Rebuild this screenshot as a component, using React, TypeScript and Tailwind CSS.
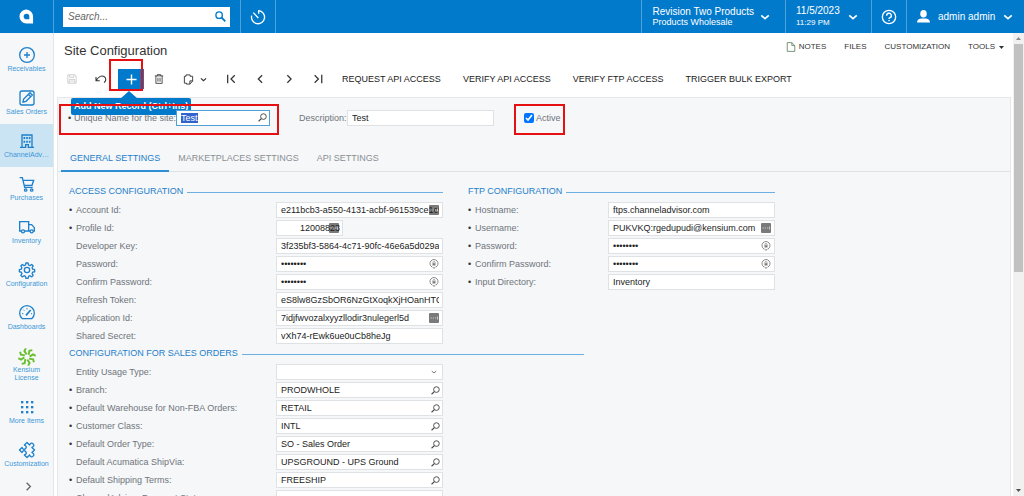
import { useEffect, useRef } from 'react';
import type { ReactNode } from 'react';
import { clsx } from 'clsx';

type IconProps = { className?: string; children: ReactNode };

function Icon({ className, children }: IconProps) {
  return (
    <svg
      viewBox="0 0 24 24"
      fill="none"
      stroke="currentColor"
      strokeWidth="2"
      aria-hidden="true"
      className={clsx('shrink-0', className)}
    >
      {children}
    </svg>
  );
}

const chevronDown = <path d="M3 8l9 8 9-8" strokeWidth="4" />;

const magnifier = (
  <>
    <circle cx="14.5" cy="9.5" r="7.5" strokeWidth="2.5" />
    <path d="M9 15L1.5 22" strokeWidth="3" />
  </>
);

const modules: { label: string; icon: ReactNode; active?: boolean; green?: boolean }[] = [
  {
    label: 'Receivables',
    icon: (
      <>
        <circle cx="12" cy="12" r="11" />
        <path d="M12 7.5v9M7.5 12h9" />
      </>
    ),
  },
  {
    label: 'Sales Orders',
    icon: (
      <>
        <rect x="1.5" y="1.5" width="21" height="21" rx="3" />
        <path d="M6 18l1-4.5 9.5-9.500 3.500 3.500-9.500 9.500zM14 6.500l3.500 3.500" />
      </>
    ),
  },
  {
    label: 'ChannelAdv…',
    active: true,
    icon: (
      <>
        <path d="M4.5 21.500V3h15v18.500M1.500 21.500h8.500v-4h4v4h8.500" />
        <path d="M8 6v3M12 6v3M16 6v3M8 11.500v3M12 11.500v3M16 11.500v3" strokeWidth="2.500" />
      </>
    ),
  },
  {
    label: 'Purchases',
    icon: (
      <>
        <path d="M1 2.500h4l3.500 14.500h12M6 6.500h16l-2.500 7.500H8" />
        <circle cx="10" cy="21" r="1.800" />
        <circle cx="19" cy="21" r="1.800" />
      </>
    ),
  },
  {
    label: 'Inventory',
    icon: (
      <>
        <path d="M3.500 18H1V4h13.500v14H8.500M14.500 8.500h4.500l4 4.500v5h-1.500M14.500 18h2" />
        <circle cx="6" cy="18.500" r="2.300" />
        <circle cx="19" cy="18.500" r="2.300" />
      </>
    ),
  },
  {
    label: 'Configuration',
    icon: (
      <g strokeLinejoin="round">
        <circle cx="12" cy="12" r="4" />
        <path d="M10.400 1.500h3.200l.7 3 2.100.9 2.700-1.700 2.200 2.200-1.700 2.700.9 2.100 3 .7v3.200l-3 .7-.9 2.100 1.700 2.700-2.200 2.200-2.700-1.700-2.100.9-.7 3h-3.200l-.7-3-2.100-.9-2.700 1.700-2.200-2.200 1.700-2.700-.9-2.100-3-.7v-3.200l3-.7.9-2.100-1.700-2.700 2.200-2.200 2.700 1.700 2.100-.9z" />
      </g>
    ),
  },
  {
    label: 'Dashboards',
    icon: (
      <>
        <path d="M5 20.500a11 11 0 1 1 14 0z" />
        <path d="M10.500 15.500l7-8" strokeWidth="2.500" />
        <path d="M4.500 13h2M6.500 7l1.500 1.500M12 4.500v2M18 13h1.500" strokeWidth="1.500" />
      </>
    ),
  },
  {
    label: 'Kensium License',
    green: true,
    icon: (
      <>
        {[0, 45, 90, 135, 180, 225, 270, 315].map((angle) => (
          <path
            key={angle}
            d="M11.500 8.500L8.500 4l2-3.500"
            strokeWidth="2.600"
            transform={`rotate(${angle} 12 12)`}
          />
        ))}
      </>
    ),
  },
  {
    label: 'More Items',
    icon: (
      <g fill="currentColor" stroke="none">
        {[3, 10.5, 18].map((y) =>
          [3, 10.5, 18].map((x) => <rect key={`${x}-${y}`} x={x} y={y} width="3.5" height="3.5" />),
        )}
      </g>
    ),
  },
  {
    label: 'Customization',
    icon: (
      <path
        transform="rotate(45 12 12)"
        strokeLinejoin="round"
        d="M4 4h5.500c-1.500-3.500.2-5 2.500-5s4 1.500 2.500 5H20v5.500c3.500-1.500 5 .2 5 2.500s-1.500 4-5 2.500V20h-5.500c1.500-3.500-.2-5-2.500-5s-4 1.500-2.500 5H4v-5.500c3.500 1.500 5-.2 5-2.500s-1.500-4-5-2.500z"
      />
    ),
  },
];

type Adornment = 'search' | 'dots' | 'key' | 'select';

type Field = {
  label: string;
  value: string;
  required?: boolean;
  type?: 'password';
  short?: boolean;
  adornment?: Adornment;
};

const accessFields: Field[] = [
  { label: 'Account Id:', value: 'e211bcb3-a550-4131-acbf-961539ce1c9c', required: true, adornment: 'dots' },
  { label: 'Profile Id:', value: '12008823', required: true, short: true, adornment: 'dots' },
  { label: 'Developer Key:', value: '3f235bf3-5864-4c71-90fc-46e6a5d029a8' },
  { label: 'Password:', value: 'password', type: 'password', adornment: 'key' },
  { label: 'Confirm Password:', value: 'password', type: 'password', adornment: 'key' },
  { label: 'Refresh Token:', value: 'eS8lw8GzSbOR6NzGtXoqkXjHOanHTQ0' },
  { label: 'Application Id:', value: '7idjfwvozalxyyzllodir3nulegerl5d', adornment: 'dots' },
  { label: 'Shared Secret:', value: 'vXh74-rEwk6ue0uCb8heJg' },
];

const ftpFields: Field[] = [
  { label: 'Hostname:', value: 'ftps.channeladvisor.com', required: true },
  { label: 'Username:', value: 'PUKVKQ:rgedupudi@kensium.com', required: true, adornment: 'dots' },
  { label: 'Password:', value: 'password', required: true, type: 'password', adornment: 'key' },
  { label: 'Confirm Password:', value: 'password', required: true, type: 'password', adornment: 'key' },
  { label: 'Input Directory:', value: 'Inventory', required: true },
];

const orderFields: Field[] = [
  { label: 'Entity Usage Type:', value: '', adornment: 'select' },
  { label: 'Branch:', value: 'PRODWHOLE', required: true, adornment: 'search' },
  { label: 'Default Warehouse for Non-FBA Orders:', value: 'RETAIL', required: true, adornment: 'search' },
  { label: 'Customer Class:', value: 'INTL', required: true, adornment: 'search' },
  { label: 'Default Order Type:', value: 'SO - Sales Order', required: true, adornment: 'search' },
  { label: 'Default Acumatica ShipVia:', value: 'UPSGROUND - UPS Ground', adornment: 'search' },
  { label: 'Default Shipping Terms:', value: 'FREESHIP', required: true, adornment: 'search' },
  { label: 'ChannelAdvisor Payment Status:', value: '', adornment: 'select' },
];

function FieldIcon({ kind }: { kind: Adornment }) {
  const place = 'pointer-events-none absolute inset-y-0 my-auto';
  if (kind === 'search') {
    return <Icon className={clsx(place, 'right-[3px] size-[9px] text-[#444]')}>{magnifier}</Icon>;
  }
  if (kind === 'select') {
    return <Icon className={clsx(place, 'right-[6px] size-[6px] text-[#777]')}>{chevronDown}</Icon>;
  }
  if (kind === 'dots') {
    return (
      <svg viewBox="0 0 20 20" aria-hidden="true" className={clsx(place, 'right-1 size-[10px]')}>
        <rect width="20" height="20" rx="2" fill="#222" fillOpacity="0.6" />
        <path d="M3 10h2.500M7.500 10H10M12 10h2.500M17 7v6" stroke="#fff" strokeWidth="1.500" strokeOpacity="0.8" />
      </svg>
    );
  }
  return (
    <svg
      viewBox="0 0 20 20"
      fill="none"
      stroke="#7d7d7d"
      strokeWidth="1.800"
      aria-hidden="true"
      className={clsx(place, 'right-1 size-[10px]')}
    >
      <path d="M6 16a8 8 0 1 1 8 0M7 15.500l3 3.500 3-3.500" />
      <path d="M7 8.500h6v4.500H7z" fill="#7d7d7d" stroke="none" />
      <path d="M8 9V7a2 2 0 0 1 4 0v2" strokeWidth="1.400" />
    </svg>
  );
}

function FieldRow({ id, field, narrow }: { id: string; field: Field; narrow?: boolean }) {
  return (
    <div className="flex h-[18px] items-center">
      <label
        htmlFor={id}
        className={clsx('flex shrink-0 items-center text-[#707479]', narrow ? 'w-[140px]' : 'w-[207px]')}
      >
        <span className="w-[7px] text-[#333]">{field.required && '•'}</span>
        {field.label}
      </label>
      <div className={clsx('relative', field.short ? 'w-[67px]' : 'w-[167px]')}>
        {field.adornment === 'select' ? (
          <select
            id={id}
            className="block h-4 w-full appearance-none border border-[#dfe2e5] bg-white px-1 text-[#222] outline-none"
          >
            <option />
          </select>
        ) : (
          <input
            id={id}
            type={field.type ?? 'text'}
            defaultValue={field.value}
            className={clsx(
              'block h-4 w-full border border-[#dfe2e5] bg-white pl-1 text-[#222] outline-none',
              field.short ? 'pr-[2px] text-right' : 'pr-[3px]',
            )}
          />
        )}
        {field.adornment && <FieldIcon kind={field.adornment} />}
      </div>
    </div>
  );
}

type FieldGroupProps = { id: string; title: string; fields: Field[]; narrow?: boolean };

function FieldGroup({ id, title, fields, narrow }: FieldGroupProps) {
  return (
    <section>
      <h2 className="flex h-[18px] items-center gap-1 pb-[2px] text-[#1e80cb]">
        {title}
        <span className="mt-[2px] h-px flex-1 bg-[#6cb0e2]" />
      </h2>
      {fields.map((field, i) => (
        <FieldRow key={field.label} id={`${id}-${i}`} field={field} narrow={narrow} />
      ))}
    </section>
  );
}

function Header() {
  return (
    <header className="flex h-[33px] shrink-0 items-center bg-[#027acc] text-white">
      <div className="flex h-full w-[54px] shrink-0 items-center justify-center border-r border-[#4da2dc]">
        <svg viewBox="0 0 16 16" aria-label="Acumatica" className="size-[15px]">
          <path d="M8 .5A7.500 7.500 0 1 0 8 15.500h7V8A7.500 7.500 0 0 0 8 .5z" fill="#fff" />
          <path d="M8 5A3 3 0 1 0 8 11h3V8a3 3 0 0 0-3-3z" fill="#027acc" />
        </svg>
      </div>
      <div className="flex h-full items-center border-r border-[#4da2dc] pl-[9px] pr-[10px]">
        <div className="relative">
          <input
            type="search"
            aria-label="Search"
            placeholder="Search..."
            className="block h-5 w-[167px] bg-white pl-[5px] pr-5 text-[10px] italic text-[#333] outline-none placeholder:text-[#666]"
          />
          <Icon className="absolute inset-y-0 right-1 my-auto size-[11px] text-[#027acc]">
            <circle cx="9" cy="9" r="7" strokeWidth="3" />
            <path d="M14 14l8.500 8.500" strokeWidth="4" />
          </Icon>
        </div>
      </div>
      <button type="button" aria-label="Recent" className="flex h-full w-[35px] items-center justify-center border-r border-[#4da2dc]">
        <Icon className="size-4">
          <path d="M13 2.500A9.800 9.800 0 1 1 2.500 10M13 2v5M12.500 13.500L5 5.500" />
        </Icon>
      </button>

      <div className="ml-auto flex h-full">
        <button type="button" className="flex h-full items-center gap-[6px] border-l border-[#4da2dc] pl-[10px] pr-[15px] text-left">
          <span>
            <span className="block text-[10px] leading-[11px]">Revision Two Products</span>
            <span className="block leading-[11px]">Products Wholesale</span>
          </span>
          <Icon className="size-[10px]">{chevronDown}</Icon>
        </button>
        <button type="button" className="flex h-full w-[86px] items-center gap-2 border-l border-[#4da2dc] pl-[10px] text-left">
          <span>
            <span className="block text-[10px] leading-3">11/5/2023</span>
            <span className="block text-[8px] leading-3">11:29 PM</span>
          </span>
          <Icon className="size-[10px]">{chevronDown}</Icon>
        </button>
        <button type="button" aria-label="Help" className="flex h-full w-[35px] items-center justify-center border-l border-[#4da2dc]">
          <Icon className="size-4">
            <circle cx="12" cy="12" r="10" />
            <path d="M8.500 10a3.500 3.500 0 1 1 5 3c-1 .5-1.500 1-1.500 2M12 16.500v2" />
          </Icon>
        </button>
        <button type="button" className="flex h-full w-[118px] items-center border-l border-[#4da2dc] pl-[10px]">
          <svg viewBox="0 0 24 24" fill="currentColor" aria-hidden="true" className="mr-2 size-[13px]">
            <ellipse cx="12" cy="7" rx="6" ry="7" />
            <path d="M0 23c0-5 4-7 8.500-7.500h7C20 16 24 18 24 23z" />
          </svg>
          <span className="text-[10px]">admin admin</span>
          <Icon className="ml-2 size-[10px]">{chevronDown}</Icon>
        </button>
      </div>
    </header>
  );
}

function Sidebar() {
  return (
    <nav className="flex w-[54px] shrink-0 flex-col items-center border-r border-[#e2e5e9] bg-[#f5f7f9] pt-[5px]">
      {modules.map((item) => (
        <a
          key={item.label}
          href="#"
          className={clsx(
            'flex w-full shrink-0 flex-col items-center px-1 pt-[9px] text-center text-[7px] leading-2 text-[#3d97d8]',
            item.active && 'bg-[#cbe4f4]',
            item.green ? 'h-[51px]' : 'h-[43px]',
          )}
        >
          <Icon
            className={clsx(
              'overflow-visible',
              item.green ? 'size-[18px] text-[#6abf2e]' : 'mb-[1px] size-4 text-[#1e80cb]',
            )}
          >
            {item.icon}
          </Icon>
          <span className={item.green ? 'w-8' : 'whitespace-nowrap pt-[1px]'}>{item.label}</span>
        </a>
      ))}
      <button type="button" aria-label="Expand menu" className="mt-[6px] ml-1 text-[#666]">
        <Icon className="size-[9px]">
          <path d="M7 2l10 10L7 22" strokeWidth="3.500" />
        </Icon>
      </button>
    </nav>
  );
}

type ToolProps = { label: string; disabled?: boolean; children: ReactNode };

function Tool({ label, disabled, children }: ToolProps) {
  return (
    <button
      type="button"
      aria-label={label}
      disabled={disabled}
      className="flex w-[29px] items-center justify-center text-[#333] disabled:text-[#c4c6c8]"
    >
      <Icon className="size-[10px] overflow-visible">{children}</Icon>
    </button>
  );
}

function Toolbar() {
  return (
    <div className="flex h-5 items-center">
      <Tool label="Save" disabled>
        <path d="M2 2h17l3 3v17H2zM6.500 2v6h10V2M5.500 22v-9h13v9M8 17h8" />
      </Tool>
      <Tool label="Cancel">
        <path d="M0 7v9h9M0.500 15.500C6 6 14 2 20 6.500c5 4 4.500 10-.5 14" strokeWidth="2.500" />
      </Tool>
      <div className="relative flex w-[29px] justify-end">
        <button
          type="button"
          aria-describedby="add-tip"
          aria-label="Add New Record"
          className="flex h-5 w-[26px] items-center justify-center bg-[#027acc] text-white"
        >
          <Icon className="size-[11px]">
            <path d="M12 1v22M1 12h22" strokeWidth="3" />
          </Icon>
        </button>
        <span className="pointer-events-none absolute -left-[6px] -top-[10px] z-30 h-8 w-[34px] border-2 border-[#e60f12]" />
        <div id="add-tip" role="tooltip" className="absolute -left-[44px] top-[29px] z-10 rounded-xs bg-[#027acc] px-[3px] text-[9px] leading-[17px] font-bold whitespace-nowrap text-white">
          <svg viewBox="0 0 18 8" aria-hidden="true" className="absolute -top-[7px] left-[49px] h-2 w-[18px] text-[#027acc]">
            <path d="M0 8l9-8 9 8z" fill="currentColor" />
          </svg>
          Add New Record (Ctrl+Ins)
        </div>
      </div>
      <Tool label="Delete">
        <path d="M2 4.500h20M8 4.500V1.500h8v3M4.500 4.500v18h15v-18M9.500 9v9.500M14.500 9v9.500" />
      </Tool>
      <button type="button" aria-label="Clipboard" className="flex w-[43px] items-center gap-[6px] pl-[10px] text-[#333]">
        <Icon className="size-[11px]">
          <path d="M7.500 20H3V5h3.500M6.500 5V2h9v3H21v10.500L15 22H7.500V20M21 15h-6v7" />
        </Icon>
        <Icon className="size-[7px]">{chevronDown}</Icon>
      </button>
      <Tool label="First">
        <path d="M4 2v20M21 3l-9 9 9 9" strokeWidth="3" />
      </Tool>
      <Tool label="Previous">
        <path d="M17 3l-9 9 9 9" strokeWidth="3" />
      </Tool>
      <Tool label="Next">
        <path d="M8 3l9 9-9 9" strokeWidth="3" />
      </Tool>
      <Tool label="Last">
        <path d="M21 2v20M4 3l9 9-9 9" strokeWidth="3" />
      </Tool>
      <div className="flex gap-[22px] pl-[10px] whitespace-nowrap text-[#222]">
        <button type="button">REQUEST API ACCESS</button>
        <button type="button">VERIFY API ACCESS</button>
        <button type="button">VERIFY FTP ACCESS</button>
        <button type="button">TRIGGER BULK EXPORT</button>
      </div>
    </div>
  );
}

function Summary() {
  const siteRef = useRef<HTMLInputElement>(null);

  useEffect(() => {
    siteRef.current?.focus();
    siteRef.current?.select();
  }, []);

  return (
    <div className="flex h-[47px] items-start pt-[6px] pl-[1px] text-[#707479]">
      <div className="relative z-20 flex h-[31px] w-[220px] items-center border-2 border-[#e60f12] pb-1 pl-[7px]">
        <label htmlFor="site" className="flex w-[108px] shrink-0 whitespace-nowrap">
          <span className="w-[7px] text-[#333]">•</span>
          Unique Name for the site:
        </label>
        <div className="relative w-[94px]">
          <input
            ref={siteRef}
            id="site"
            defaultValue="Test"
            className="block h-4 w-full border border-[#4f9fd8] bg-white px-1 text-[#222] outline-none selection:bg-[#3064cc] selection:text-white"
          />
          <FieldIcon kind="search" />
        </div>
      </div>
      <div className="flex h-[27px] items-center pl-5">
        <label htmlFor="description" className="w-[48px] whitespace-nowrap">
          Description:
        </label>
        <input
          id="description"
          defaultValue="Test"
          className="block h-4 w-[147px] border border-[#dfe2e5] bg-white px-1 text-[#222] outline-none"
        />
      </div>
      <label className="ml-5 flex h-[31px] items-center gap-[2px] border-2 border-[#e60f12] pr-[2px] pb-1 pl-2">
        <input type="checkbox" defaultChecked className="size-[10px] accent-[#0075ff]" />
        Active
      </label>
    </div>
  );
}

const tabs = ['GENERAL SETTINGS', 'MARKETPLACES SETTINGS', 'API SETTINGS'];

export default function App() {
  return (
    <div className="flex h-screen flex-col overflow-hidden bg-white font-['Liberation_Sans',Arial,sans-serif] text-[9px] leading-3">
      <Header />
      <div className="flex min-h-0 flex-1">
        <Sidebar />
        <main className="flex min-w-0 flex-1 flex-col pl-[3px]">
          <div className="flex h-9 shrink-0 items-start justify-between pr-[9px]">
            <h1 className="pt-[10px] pl-[7px] text-[13px] leading-4 text-[#333]">Site Configuration</h1>
            <div className="flex gap-[18px] pt-2 text-[8px] text-[#333]">
              <button type="button" className="flex items-center gap-[3px]">
                <Icon className="size-[10px] text-[#5f7f5f]">
                  <path d="M3 1.500h11l7 7v14H3zM14 1.500v7h7" />
                </Icon>
                NOTES
              </button>
              <button type="button">FILES</button>
              <button type="button">CUSTOMIZATION</button>
              <button type="button" className="flex items-center gap-1">
                TOOLS
                <svg viewBox="0 0 10 6" aria-hidden="true" className="h-[3px] w-[5px]">
                  <path d="M0 0h10L5 6z" fill="currentColor" />
                </svg>
              </button>
            </div>
          </div>
          <Toolbar />
          <div className="mt-2 mr-[2px] min-h-0 flex-1 overflow-hidden border border-b-0 border-[#e5e7ea] bg-[#f5f7f9]">
            <Summary />
            <div role="tablist" className="flex h-[27px] border-b border-[#dfe2e5] pl-[3px]">
              {tabs.map((tab, i) => (
                <button
                  key={tab}
                  type="button"
                  role="tab"
                  aria-selected={i === 0}
                  className="-mb-px border-b-2 border-transparent px-[9px] text-[#8b8f93] aria-selected:border-[#2f8fd6] aria-selected:text-[#1e80cb]"
                >
                  {tab}
                </button>
              ))}
            </div>
            <div className="pt-[11px] pl-[11px]">
              <div className="flex gap-[25px]">
                <div className="w-[374px]">
                  <FieldGroup id="access" title="ACCESS CONFIGURATION" fields={accessFields} />
                </div>
                <div className="w-[307px]">
                  <FieldGroup id="ftp" title="FTP CONFIGURATION" fields={ftpFields} narrow />
                </div>
              </div>
              <div className="w-[515px]">
                <FieldGroup id="orders" title="CONFIGURATION FOR SALES ORDERS" fields={orderFields} />
              </div>
            </div>
          </div>
        </main>
        <div aria-hidden="true" className="flex w-[11px] shrink-0 flex-col items-center bg-[#f1f1f1] py-1">
          <svg viewBox="0 0 10 6" className="h-[3px] w-[5px] text-[#8a8a8a]">
            <path d="M5 0l5 6H0z" fill="currentColor" />
          </svg>
          <div className="mt-1 h-1/2 w-[9px] bg-[#c1c1c1]" />
          <svg viewBox="0 0 10 6" className="mt-auto h-[3px] w-[5px] text-[#505050]">
            <path d="M0 0h10L5 6z" fill="currentColor" />
          </svg>
        </div>
      </div>
    </div>
  );
}
